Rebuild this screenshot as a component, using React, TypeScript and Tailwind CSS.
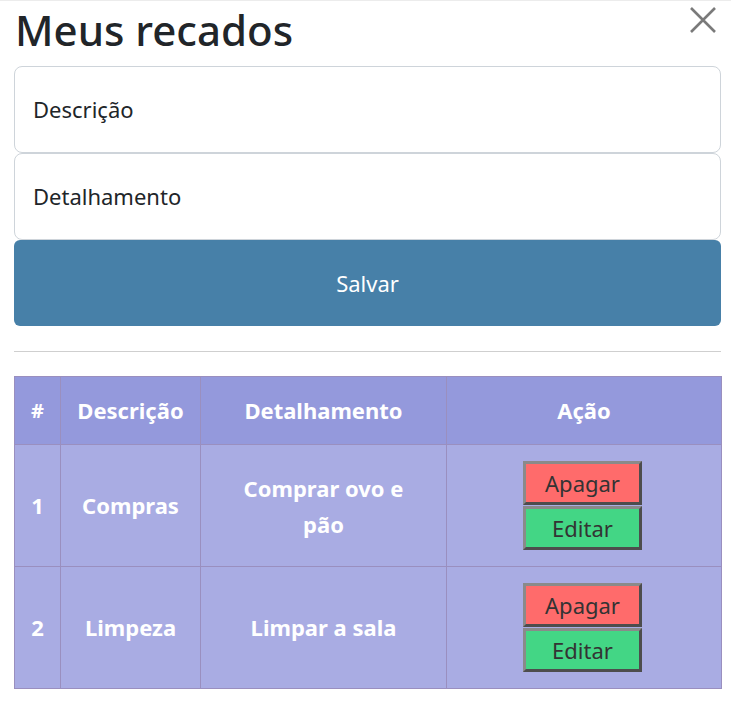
import React from "react";

const font = { fontFamily: '"Noto Sans", "Open Sans", sans-serif' };

function ActionButtons() {
  return (
    <div className="flex flex-col items-center gap-[1px] font-normal pr-[3px]">
      <button className="w-[119px] h-[44px] bg-[#ff6b6b] border-[3px] border-t-[#8a8a8a] border-l-[#8a8a8a] border-b-[#4d4d4d] border-r-[#4d4d4d] text-[22px] text-[#333] leading-none">
        Apagar
      </button>
      <button className="w-[119px] h-[44px] bg-[#43d685] border-[3px] border-t-[#8a8a8a] border-l-[#8a8a8a] border-b-[#4d4d4d] border-r-[#4d4d4d] text-[22px] text-[#333] leading-none">
        Editar
      </button>
    </div>
  );
}

export default function App() {
  return (
    <div className="w-[731px] h-[722px] bg-white border-t border-[#ececec] relative" style={font}>
      <div className="pl-[14px] pr-[10px]">
        <div className="flex items-start justify-between h-[64px]">
          <h1 className="text-[42px] leading-[58px] font-medium text-[#212529] ml-[1px]">Meus recados</h1>
          <svg width="28" height="26" viewBox="0 0 28 26" className="mt-[6px] mr-[4px]">
            <path d="M2 1 L26 25 M26 1 L2 25" stroke="#7a7a7a" strokeWidth="2.6" strokeLinecap="butt" />
          </svg>
        </div>
        <div className="mt-[1px] flex flex-col">
          <div className="h-[87px] border border-[#ced4da] rounded-[8px] flex items-center px-[18px] text-[22px] text-[#212529]">
            Descrição
          </div>
          <div className="h-[87px] border border-[#ced4da] rounded-[8px] flex items-center px-[18px] text-[22px] text-[#212529]">
            Detalhamento
          </div>
          <button className="h-[86px] rounded-[6px] bg-[#4780a8] text-white text-[22px]">Salvar</button>
        </div>
        <div className="mt-[25px] h-[1px] bg-[#cfcfcf]"></div>
        <table className="mt-[24px] w-[707px] border-collapse table-fixed text-white font-bold text-[22px]">
          <colgroup>
            <col className="w-[46px]" />
            <col className="w-[140px]" />
            <col className="w-[246px]" />
            <col className="w-[275px]" />
          </colgroup>
          <thead>
            <tr className="bg-[#9499dc] h-[68px]">
              <th className="border border-[#9a8fbf] text-[20px]">#</th>
              <th className="border border-[#9a8fbf]">Descrição</th>
              <th className="border border-[#9a8fbf]">Detalhamento</th>
              <th className="border border-[#9a8fbf]">Ação</th>
            </tr>
          </thead>
          <tbody>
            <tr className="bg-[#a9ace3] h-[122px]">
              <td className="border border-[#9a8fbf] text-center">1</td>
              <td className="border border-[#9a8fbf] text-center">Compras</td>
              <td className="border border-[#9a8fbf] text-center leading-[36px]">
                Comprar ovo e<br />pão
              </td>
              <td className="border border-[#9a8fbf]">
                <ActionButtons />
              </td>
            </tr>
            <tr className="bg-[#a9ace3] h-[122px]">
              <td className="border border-[#9a8fbf] text-center">2</td>
              <td className="border border-[#9a8fbf] text-center">Limpeza</td>
              <td className="border border-[#9a8fbf] text-center">Limpar a sala</td>
              <td className="border border-[#9a8fbf]">
                <ActionButtons />
              </td>
            </tr>
          </tbody>
        </table>
      </div>
    </div>
  );
}
